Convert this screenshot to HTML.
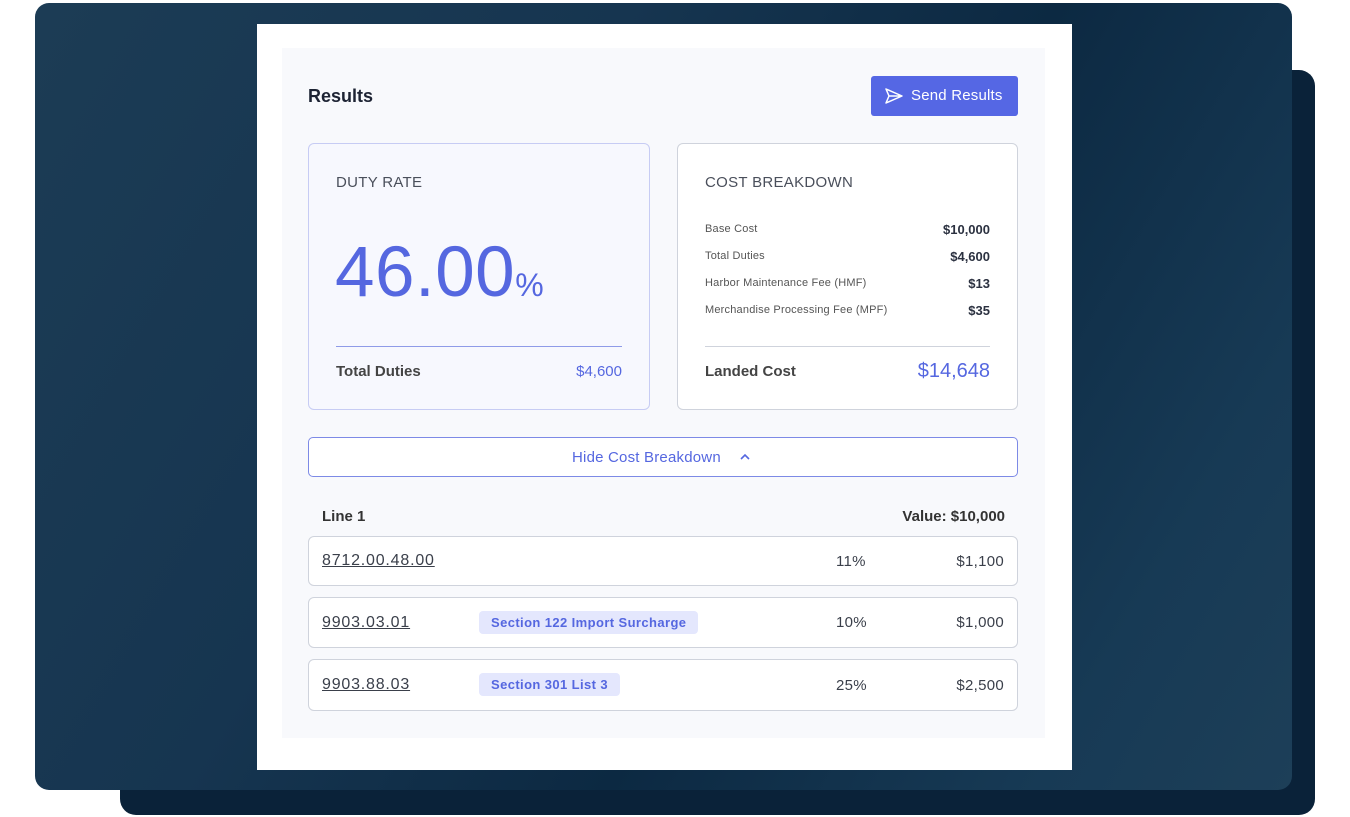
<!DOCTYPE html>
<html><head><style>
*{margin:0;padding:0;box-sizing:border-box}
body{width:1350px;height:817px;background:#fff;position:relative;overflow:hidden;font-family:"Liberation Sans",sans-serif;color:#2b3140}
.a{position:absolute}
.back{left:120px;top:70px;width:1195px;height:745px;background:#0a2239;border-radius:16px}
.main{left:35px;top:3px;width:1257px;height:787px;border-radius:14px;background:linear-gradient(120deg,#1c3c55 0%,#163550 35%,#0c2942 60%,#173a55 85%,#1d3f58 100%)}
.card{left:257px;top:24px;width:815px;height:746px;background:#fff}
.inner{left:282px;top:48px;width:763px;height:690px;background:#f8f9fc}
.box{background:#fff;border:1px solid #cfd3dc;border-radius:6px}
.lbl{font-size:15px;color:#4a4f5b;letter-spacing:.3px}
.row{font-size:11px;color:#555;letter-spacing:.2px}
.val{font-size:13px;font-weight:bold;color:#2b3140;text-align:right}
.tag{background:#e4e7fd;color:#5567e0;font-size:13px;font-weight:bold;border-radius:4px;padding:0 12px;height:23px;line-height:23px;letter-spacing:.4px}
.code{font-size:16px;color:#3a3f4a;text-decoration:underline;letter-spacing:.8px}
.pct,.amt{font-size:15px;color:#3a3f4a;letter-spacing:.3px}
</style></head><body>
<div class="a back"></div>
<div class="a main"></div>
<div class="a card"></div>
<div class="a inner"></div>
<div class="a" style="left:308px;top:86px;font-size:18px;font-weight:bold;color:#1d2333">Results</div>
<div class="a" style="left:871px;top:76px;width:147px;height:40px;background:#5567e4;border-radius:3px;color:#fff;font-size:15px;line-height:40px">
<svg class="a" style="left:13px;top:11px" width="20" height="18" viewBox="0 0 20 18"><path d="M2 2 L18 9 L2 16 L5 9 Z M5 9 H18" fill="none" stroke="#fff" stroke-width="1.5" stroke-linejoin="round"/></svg>
<span class="a" style="left:40px;top:0;letter-spacing:.2px">Send Results</span></div>

<div class="a box" style="left:308px;top:143px;width:342px;height:267px;background:#f7f8fe;border-color:#c7ccf4"></div>
<div class="a lbl" style="left:336px;top:174px">DUTY RATE</div>
<div class="a" style="left:335px;top:232px;font-size:71px;color:#5567e0;letter-spacing:.5px">46.00<span style="font-size:32px">%</span></div>
<div class="a" style="left:336px;top:346px;width:286px;height:1px;background:#8f9be8"></div>
<div class="a" style="left:336px;top:363px;font-size:15px;font-weight:bold;color:#444">Total Duties</div>
<div class="a" style="left:540px;top:363px;width:82px;text-align:right;font-size:15px;color:#5567e0">$4,600</div>

<div class="a box" style="left:677px;top:143px;width:341px;height:267px"></div>
<div class="a lbl" style="left:705px;top:174px">COST BREAKDOWN</div>
<div class="a row" style="left:705px;top:223px">Base Cost</div><div class="a val" style="left:890px;top:222px;width:100px">$10,000</div>
<div class="a row" style="left:705px;top:250px">Total Duties</div><div class="a val" style="left:890px;top:249px;width:100px">$4,600</div>
<div class="a row" style="left:705px;top:277px">Harbor Maintenance Fee (HMF)</div><div class="a val" style="left:890px;top:276px;width:100px">$13</div>
<div class="a row" style="left:705px;top:304px">Merchandise Processing Fee (MPF)</div><div class="a val" style="left:890px;top:303px;width:100px">$35</div>
<div class="a" style="left:705px;top:346px;width:285px;height:1px;background:#cfd3dc"></div>
<div class="a" style="left:705px;top:363px;font-size:15px;font-weight:bold;color:#444">Landed Cost</div>
<div class="a" style="left:870px;top:360px;width:120px;text-align:right;font-size:20px;color:#5567e0">$14,648</div>

<div class="a" style="left:308px;top:437px;width:710px;height:40px;border:1.5px solid #7d8ae6;border-radius:5px;background:#fff"></div>
<div class="a" style="left:572px;top:449px;font-size:15px;color:#5567e0;letter-spacing:.2px">Hide Cost Breakdown</div>
<svg class="a" style="left:739px;top:452px" width="12" height="10" viewBox="0 0 12 10"><path d="M2 7 L6 3 L10 7" fill="none" stroke="#5567e0" stroke-width="1.6"/></svg>

<div class="a" style="left:322px;top:508px;font-size:15px;font-weight:bold;color:#333">Line 1</div>
<div class="a" style="left:860px;top:508px;width:145px;text-align:right;font-size:15px;font-weight:bold;color:#333">Value: $10,000</div>

<div class="a box" style="left:308px;top:536px;width:710px;height:50px"></div>
<div class="a code" style="left:322px;top:552px">8712.00.48.00</div>
<div class="a pct" style="left:836px;top:553px">11%</div>
<div class="a amt" style="left:920px;top:553px;width:84px;text-align:right">$1,100</div>

<div class="a box" style="left:308px;top:597px;width:710px;height:51px"></div>
<div class="a code" style="left:322px;top:614px">9903.03.01</div>
<div class="a tag" style="left:479px;top:611px">Section 122 Import Surcharge</div>
<div class="a pct" style="left:836px;top:614px">10%</div>
<div class="a amt" style="left:920px;top:614px;width:84px;text-align:right">$1,000</div>

<div class="a box" style="left:308px;top:659px;width:710px;height:52px"></div>
<div class="a code" style="left:322px;top:676px">9903.88.03</div>
<div class="a tag" style="left:479px;top:673px">Section 301 List 3</div>
<div class="a pct" style="left:836px;top:677px">25%</div>
<div class="a amt" style="left:920px;top:677px;width:84px;text-align:right">$2,500</div>
</body></html>
